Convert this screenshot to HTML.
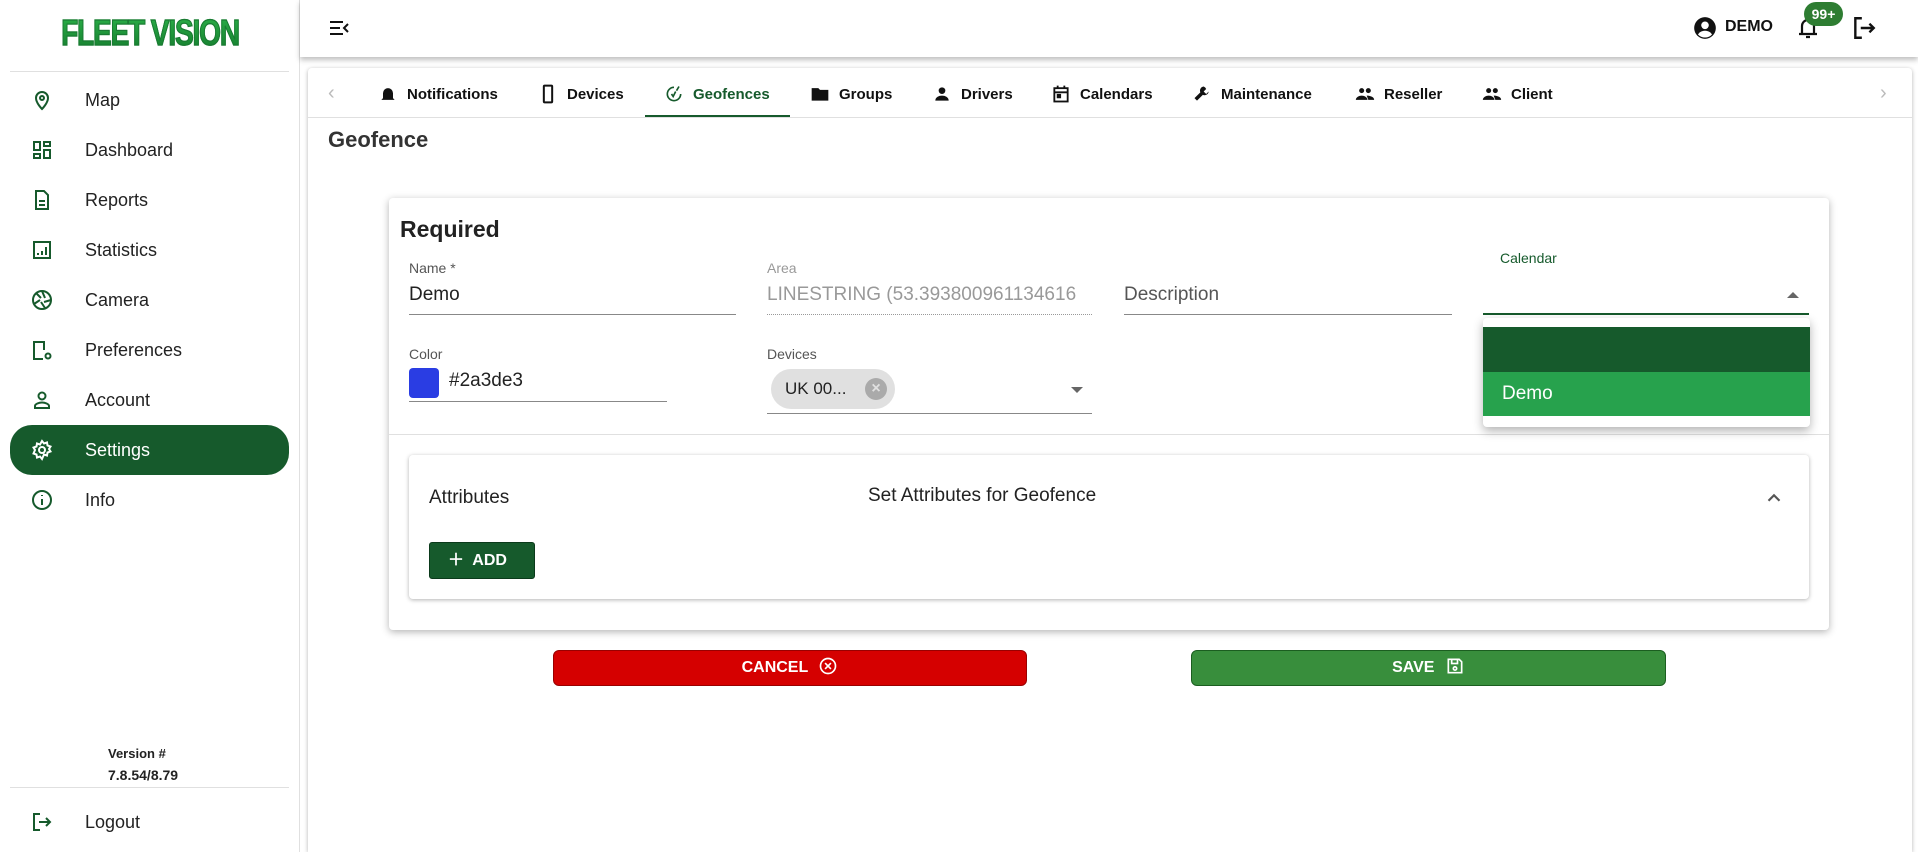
<!DOCTYPE html>
<html><head><meta charset="utf-8"><style>
*{box-sizing:border-box;margin:0;padding:0}
html{width:1918px;height:852px;overflow:hidden}
body{width:1918px;height:852px;overflow:hidden;background:#fff;font-family:"Liberation Sans",sans-serif;color:#222;position:relative}
.a{position:absolute}
.side{left:0;top:0;width:300px;height:852px;border-right:1px solid #e0e0e0;background:#fff}
.nav{position:absolute;left:0;width:300px;height:50px;display:flex;align-items:center;font-size:18px;color:#222}
.nav svg{position:absolute;left:30px;width:24px;height:24px}
.nav span{position:absolute;left:85px}
.sel{left:10px;width:279px;border-radius:22px;background:#165a2c;color:#fff}
.sel svg{left:20px}.sel span{left:75px}
.tab{position:absolute;top:82px;height:24px;display:flex;align-items:center;font-size:15px;font-weight:bold;color:#111}
.tab svg{width:20px;height:20px;margin-right:9px}
.lbl{position:absolute;font-size:14px;color:#555}
.val{position:absolute;font-size:19px;color:#222}
.ul{position:absolute;height:1px;background:#888}
</style></head><body>
<div class="a side">
 <div class="a" style="left:0;width:300px;top:12px;text-align:center;font-weight:bold;font-size:36px;color:#1f8a3a;letter-spacing:-1.5px;transform:scaleX(.78);-webkit-text-stroke:1.2px #1a7a33;background:linear-gradient(#2db34a,#137a2c);-webkit-background-clip:text;-webkit-text-fill-color:transparent">FLEET VISION</div>
 <div class="a" style="left:10px;width:279px;top:71px;height:1px;background:#e0e0e0"></div>
 <div class="nav" style="top:75px"><svg viewBox="0 0 24 24" fill="none" stroke="#165a2c" stroke-width="2"><path d="M12 21s-6-6-6-11a6 6 0 0112 0c0 5-6 11-6 11z"/><circle cx="12" cy="10" r="2"/></svg><span>Map</span></div>
 <div class="nav" style="top:125px"><svg viewBox="0 0 24 24" fill="none" stroke="#165a2c" stroke-width="2"><rect x="4" y="4" width="6" height="8"/><rect x="14" y="4" width="6" height="4"/><rect x="4" y="16" width="6" height="4"/><rect x="14" y="12" width="6" height="8"/></svg><span>Dashboard</span></div>
 <div class="nav" style="top:175px"><svg viewBox="0 0 24 24" fill="none" stroke="#165a2c" stroke-width="2"><path d="M6 3h8l4 4v14H6z"/><path d="M9 13h6M9 17h6"/></svg><span>Reports</span></div>
 <div class="nav" style="top:225px"><svg viewBox="0 0 24 24" fill="none" stroke="#165a2c" stroke-width="2"><rect x="4" y="4" width="16" height="16"/><path d="M8 17v-2M12 17v-4M16 17V9"/></svg><span>Statistics</span></div>
 <div class="nav" style="top:275px"><svg viewBox="0 0 24 24" fill="none" stroke="#165a2c" stroke-width="2"><circle cx="12" cy="12" r="9"/><path d="M12 3l3 7M21 12l-7 2M15 20l-4-6M4 16l6-4M6 5l5 5"/></svg><span>Camera</span></div>
 <div class="nav" style="top:325px"><svg viewBox="0 0 24 24" fill="none" stroke="#165a2c" stroke-width="2"><path d="M4 21V4h10v8M3 21h10"/><circle cx="18" cy="18" r="2.5"/></svg><span>Preferences</span></div>
 <div class="nav" style="top:375px"><svg viewBox="0 0 24 24" fill="none" stroke="#165a2c" stroke-width="2"><circle cx="12" cy="8" r="3.5"/><path d="M5 20v-2c0-2 4-3.5 7-3.5s7 1.5 7 3.5v2z"/></svg><span>Account</span></div>
 <div class="nav sel" style="top:425px"><svg viewBox="0 0 24 24" fill="none" stroke="#fff" stroke-width="2"><circle cx="12" cy="12" r="3"/><path d="M12 3l2 2.5 3-1 .5 3 3 1-1.5 2.5 1.5 2.5-3 1-.5 3-3-1L12 21l-2-2.5-3 1-.5-3-3-1L5 12 3.5 9.5l3-1 .5-3 3 1z"/></svg><span>Settings</span></div>
 <div class="nav" style="top:475px"><svg viewBox="0 0 24 24" fill="none" stroke="#165a2c" stroke-width="2"><circle cx="12" cy="12" r="9"/><path d="M12 11v6M12 7v1"/></svg><span>Info</span></div>
 <div class="a" style="left:108px;top:746px;font-size:13px;font-weight:bold;color:#222">Version #</div>
 <div class="a" style="left:108px;top:767px;font-size:14px;font-weight:bold;color:#222">7.8.54/8.79</div>
 <div class="a" style="left:10px;width:279px;top:787px;height:1px;background:#e0e0e0"></div>
 <div class="nav" style="top:797px"><svg viewBox="0 0 24 24" fill="none" stroke="#165a2c" stroke-width="2"><path d="M10 4H4v16h6M9 12h11M16 8l4 4-4 4"/></svg><span>Logout</span></div>
</div>
<div class="a" style="left:300px;top:0;width:1618px;height:57px;background:#fff;box-shadow:0 3px 5px rgba(0,0,0,.25)"></div>
<svg class="a" style="left:327px;top:16px" width="24" height="24" viewBox="0 0 24 24" fill="none" stroke="#111" stroke-width="2"><path d="M3 6h13M3 12h10M3 18h13M21 8l-4 4 4 4"/></svg>
<svg class="a" style="left:1692px;top:15px" width="26" height="26" viewBox="0 0 24 24"><circle cx="12" cy="12" r="10" fill="#111"/><circle cx="12" cy="9.5" r="3.5" fill="#fff"/><path d="M5.5 18c1.5-2.5 4-3.5 6.5-3.5s5 1 6.5 3.5a9 9 0 01-13 0z" fill="#fff"/></svg>
<div class="a" style="left:1725px;top:18px;font-size:16px;font-weight:bold;color:#111">DEMO</div>
<svg class="a" style="left:1796px;top:15px" width="24" height="26" viewBox="0 0 24 26" fill="none" stroke="#111" stroke-width="2.2"><path d="M6 19V11a6 6 0 0112 0v8M3 19h18M10 22h4"/></svg>
<div class="a" style="left:1804px;top:2px;width:39px;height:24px;border-radius:12px;background:#2e7d32;color:#fff;font-size:14px;font-weight:bold;text-align:center;line-height:24px">99+</div>
<svg class="a" style="left:1851px;top:15px" width="26" height="26" viewBox="0 0 24 24" fill="none" stroke="#111" stroke-width="2.2"><path d="M10 3H4v18h6M9 12h12M17 8l4 4-4 4"/></svg>
<div class="a" style="left:308px;top:68px;width:1604px;height:784px;background:#fff;border-radius:4px 4px 0 0;box-shadow:0 1px 4px rgba(0,0,0,.3)"></div>
<div class="a" style="left:308px;top:117px;width:1604px;height:1px;background:#e0e0e0"></div>
<div class="a" style="left:328px;top:82px;font-size:20px;color:#bbb">‹</div>
<div class="a" style="left:1880px;top:82px;font-size:20px;color:#bbb">›</div>
<div class="tab" style="left:378px"><svg viewBox="0 0 24 24"><path d="M6 17V11a6 6 0 0112 0v6l2 2H4zM10 21h4" fill="#111"/></svg>Notifications</div>
<div class="tab" style="left:538px"><svg viewBox="0 0 24 24" fill="none" stroke="#111" stroke-width="2.4"><rect x="7" y="2" width="10" height="20" rx="1"/></svg>Devices</div>
<div class="tab" style="left:664px;color:#165a2c"><svg viewBox="0 0 24 24" fill="none" stroke="#165a2c" stroke-width="2"><path d="M12 4a8 8 0 108 8M14 9l-3 6-2-3M18 3l-3 5"/></svg>Geofences</div>
<div class="tab" style="left:810px"><svg viewBox="0 0 24 24"><path d="M2 5h8l2 2h10v13H2z" fill="#111"/></svg>Groups</div>
<div class="tab" style="left:932px"><svg viewBox="0 0 24 24" fill="#111"><circle cx="12" cy="8" r="4"/><path d="M4 20c0-4 4-6 8-6s8 2 8 6z"/></svg>Drivers</div>
<div class="tab" style="left:1051px"><svg viewBox="0 0 24 24" fill="none" stroke="#111" stroke-width="2.2"><rect x="4" y="5" width="16" height="16"/><path d="M8 2v4M16 2v4M4 10h16"/><rect x="8" y="13" width="3" height="3" fill="#111"/></svg>Calendars</div>
<div class="tab" style="left:1192px"><svg viewBox="0 0 24 24"><path d="M14 3a5 5 0 00-4 7l-7 7 3 3 7-7a5 5 0 007-4l-3 3-3-3 3-3a5 5 0 00-3-3z" fill="#111"/></svg>Maintenance</div>
<div class="tab" style="left:1355px"><svg viewBox="0 0 24 24" fill="#111"><circle cx="8" cy="8" r="3"/><circle cx="16" cy="8" r="3"/><path d="M1 19c0-3 4-5 7-5s7 2 7 5zM14 14c3 0 9 1 9 5h-7z"/></svg>Reseller</div>
<div class="tab" style="left:1482px"><svg viewBox="0 0 24 24" fill="#111"><circle cx="8" cy="8" r="3"/><circle cx="16" cy="8" r="3"/><path d="M1 19c0-3 4-5 7-5s7 2 7 5zM14 14c3 0 9 1 9 5h-7z"/></svg>Client</div>
<div class="a" style="left:645px;top:115px;width:145px;height:2px;background:#165a2c"></div>
<div class="a" style="left:328px;top:127px;font-size:22px;font-weight:bold;color:#333">Geofence</div>
<div class="a" style="left:389px;top:198px;width:1440px;height:432px;background:#fff;border-radius:4px;box-shadow:0 2px 8px rgba(0,0,0,.3)"></div>
<div class="a" style="left:400px;top:216px;font-size:23px;font-weight:bold;color:#222">Required</div>
<div class="lbl" style="left:409px;top:260px">Name *</div>
<div class="val" style="left:409px;top:284px">Demo</div>
<div class="ul" style="left:409px;top:314px;width:327px"></div>
<div class="lbl" style="left:767px;top:260px;color:#999">Area</div>
<div class="val" style="left:767px;top:284px;color:#999">LINESTRING (53.393800961134616</div>
<div class="ul" style="left:767px;top:314px;width:325px;background:none;border-top:1px dotted #999"></div>
<div class="val" style="left:1124px;top:284px;color:#555">Description</div>
<div class="ul" style="left:1124px;top:314px;width:328px"></div>
<div class="lbl" style="left:1500px;top:250px;color:#165a2c">Calendar</div>
<div class="a" style="left:1787px;top:292px;width:0;height:0;border-left:6px solid transparent;border-right:6px solid transparent;border-bottom:6px solid #666"></div>
<div class="ul" style="left:1483px;top:313px;width:326px;height:2px;background:#165a2c"></div>
<div class="lbl" style="left:409px;top:346px">Color</div>
<div class="a" style="left:409px;top:368px;width:30px;height:30px;border-radius:4px;background:#2a3de3"></div>
<div class="val" style="left:449px;top:370px">#2a3de3</div>
<div class="ul" style="left:409px;top:401px;width:258px"></div>
<div class="lbl" style="left:767px;top:346px">Devices</div>
<div class="a" style="left:771px;top:369px;width:124px;height:40px;border-radius:20px;background:#e0e0e0"></div>
<div class="a" style="left:785px;top:379px;font-size:17px;color:#222">UK 00...</div>
<div class="a" style="left:865px;top:378px;width:22px;height:22px;border-radius:50%;background:#aaa;color:#e0e0e0;font-size:16px;text-align:center;line-height:22px;font-weight:bold">×</div>
<div class="a" style="left:1071px;top:387px;width:0;height:0;border-left:6px solid transparent;border-right:6px solid transparent;border-top:6px solid #666"></div>
<div class="ul" style="left:767px;top:413px;width:325px"></div>
<div class="a" style="left:389px;top:434px;width:1440px;height:1px;background:#e0e0e0"></div>
<div class="a" style="left:409px;top:455px;width:1400px;height:144px;background:#fff;border-radius:4px;box-shadow:0 1px 4px rgba(0,0,0,.3)"></div>
<div class="a" style="left:429px;top:487px;font-size:19px;color:#222">Attributes</div>
<div class="a" style="left:868px;top:485px;font-size:19px;color:#222">Set Attributes for Geofence</div>
<svg class="a" style="left:1763px;top:487px" width="22" height="22" viewBox="0 0 24 24" fill="none" stroke="#555" stroke-width="2.4"><path d="M6 15l6-6 6 6"/></svg>
<div class="a" style="left:429px;top:542px;width:106px;height:37px;border-radius:3px;background:#165a2c;border:1px solid #0b3a1b;color:#fff;font-size:16px;font-weight:bold;line-height:35px;padding-left:18px">＋&nbsp; ADD</div>
<div class="a" style="left:1483px;top:318px;width:327px;height:109px;background:#fff;border-radius:4px;box-shadow:0 4px 10px rgba(0,0,0,.3)"></div>
<div class="a" style="left:1483px;top:327px;width:327px;height:45px;background:#165a2c"></div>
<div class="a" style="left:1483px;top:372px;width:327px;height:44px;background:#27a24d;color:#fff;font-size:19px;line-height:44px;padding-left:19px">Demo</div>
<div class="a" style="left:553px;top:650px;width:474px;height:36px;border-radius:6px;background:#d50000;border:1px solid #900;color:#fff;font-size:16px;font-weight:bold;text-align:center;line-height:34px">CANCEL <svg width="20" height="20" viewBox="0 0 24 24" style="vertical-align:-4px;margin-left:6px" fill="none" stroke="#fff" stroke-width="2"><circle cx="12" cy="12" r="9"/><path d="M8.5 8.5l7 7M15.5 8.5l-7 7"/></svg></div>
<div class="a" style="left:1191px;top:650px;width:475px;height:36px;border-radius:6px;background:#388e3c;border:1px solid #1b5e20;color:#fff;font-size:16px;font-weight:bold;text-align:center;line-height:34px">SAVE <svg width="20" height="20" viewBox="0 0 24 24" style="vertical-align:-4px;margin-left:6px" fill="none" stroke="#fff" stroke-width="2"><path d="M4 4h13l3 3v13H4z"/><rect x="8" y="4" width="7" height="5"/><circle cx="12" cy="15" r="2"/></svg></div>
</body></html>
